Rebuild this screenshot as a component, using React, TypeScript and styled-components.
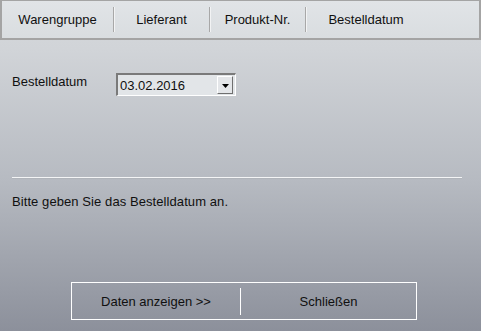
import React from "react";
import styled, { createGlobalStyle } from "styled-components";

const GlobalStyle = createGlobalStyle`
  html, body {
    margin: 0;
    padding: 0;
  }
  body {
    font-family: "Liberation Sans", Arial, sans-serif;
    font-size: 13px;
    color: #101010;
  }
`;

const tabs = [
  { label: "Warengruppe", width: 114 },
  { label: "Lieferant", width: 96 },
  { label: "Produkt-Nr.", width: 96 },
  { label: "Bestelldatum", width: 120 },
];

export default function App() {
  return (
    <>
      <GlobalStyle />
      <Window>
        <TabBar>
          {tabs.map((tab, i) => (
            <Tab key={tab.label} $width={tab.width} $divider={i < tabs.length - 1}>
              {tab.label}
            </Tab>
          ))}
        </TabBar>

        <Content>
          <FieldRow>
            <FieldLabel>Bestelldatum</FieldLabel>
            <DateSelect>
              <DateValue>03.02.2016</DateValue>
              <DropButton>
                <svg width="7" height="4" viewBox="0 0 7 4">
                  <path d="M0 0h7L3.5 4z" fill="#000" />
                </svg>
              </DropButton>
            </DateSelect>
          </FieldRow>

          <Divider />

          <Message>Bitte geben Sie das Bestelldatum an.</Message>

          <ButtonGroup>
            <ActionButton $divider>Daten anzeigen &gt;&gt;</ActionButton>
            <ActionButton>Schließen</ActionButton>
          </ButtonGroup>
        </Content>
      </Window>
    </>
  );
}

const Window = styled.div`
  width: 481px;
  height: 331px;
  display: flex;
  flex-direction: column;
  background: linear-gradient(180deg, #d6d9dc 0%, #d1d4d8 15%, #b6bac1 55%, #8c909b 100%);
  overflow: hidden;
`;

const TabBar = styled.div`
  height: 37px;
  display: flex;
  align-items: center;
  border: 1px solid #a4a4a4;
  border-left-width: 2px;
  border-right-width: 2px;
  border-bottom-width: 2px;
  background: linear-gradient(180deg, #e1e4e7 0%, #d9dde0 100%);
`;

const Tab = styled.div<{ $width: number; $divider?: boolean }>`
  width: ${(p) => p.$width}px;
  height: 25px;
  box-sizing: border-box;
  display: flex;
  align-items: center;
  justify-content: center;
  padding-bottom: 1px;
  border-right: ${(p) => (p.$divider ? "1px solid #a8a8a8" : "none")};
  box-shadow: ${(p) => (p.$divider ? "1px 0 0 #f2f3f4" : "none")};
  &:first-child {
    width: ${(p) => p.$width - 2}px;
  }
`;

const Content = styled.div`
  flex: 1;
  display: flex;
  flex-direction: column;
  padding: 0 12px;
`;

const FieldRow = styled.div`
  margin-top: 33px;
  display: flex;
  align-items: flex-start;
`;

const FieldLabel = styled.div`
  width: 104px;
  padding-top: 1px;
`;

const DateSelect = styled.div`
  width: 120px;
  height: 23px;
  box-sizing: border-box;
  display: flex;
  align-items: center;
  justify-content: space-between;
  background: #e2e5e8;
  border-top: 2px solid #7a7a7a;
  border-left: 2px solid #7a7a7a;
  border-right: 1px solid #ffffff;
  border-bottom: 1px solid #ffffff;
  padding: 0 2px;
`;

const DateValue = styled.span`
  font-size: 13px;
`;

const DropButton = styled.div`
  width: 16px;
  height: 18px;
  box-sizing: border-box;
  display: flex;
  align-items: center;
  justify-content: center;
  background: #e4e6e9;
  border-top: 1px solid #ffffff;
  border-left: 1px solid #ffffff;
  border-right: 1px solid #6f6f6f;
  border-bottom: 1px solid #6f6f6f;
  svg {
    display: block;
    margin-top: 1px;
  }
`;

const Divider = styled.div`
  margin-top: 81px;
  width: 450px;
  height: 1px;
  background: #f4f5f6;
  box-shadow: 0 1px 0 #b0b4ba;
`;

const Message = styled.div`
  margin-top: 16px;
  letter-spacing: 0.08px;
`;

const ButtonGroup = styled.div`
  margin-top: 73px;
  margin-left: 59px;
  width: 346px;
  height: 38px;
  box-sizing: border-box;
  display: flex;
  align-items: center;
  border: 1px solid #ffffff;
`;

const ActionButton = styled.div<{ $divider?: boolean }>`
  flex: ${(p) => (p.$divider ? "0 0 169px" : "1")};
  height: 27px;
  display: flex;
  align-items: center;
  justify-content: center;
  border-right: ${(p) => (p.$divider ? "1px solid #ffffff" : "none")};
  padding-top: 1px;
  box-sizing: border-box;
`;
